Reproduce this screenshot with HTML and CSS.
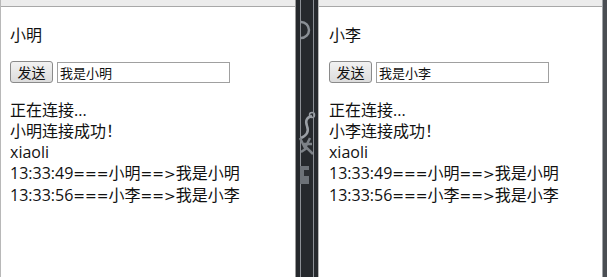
FILE: index.html
```html
<!DOCTYPE html>
<html lang="zh-CN">
<head>
  <meta charset="UTF-8">
  <title>WebSocket 聊天</title>
  <link rel="stylesheet" href="styles.css">
</head>
<body>
  <div class="desktop">
    <!-- 小明 -->
    <section class="pane pane-left">
      <div class="titlebar"></div>
      <div class="page">
        <div class="name">小明</div>
        <div class="send-row">
          <button class="send-btn">发送</button>
          <input class="msg-input" type="text" value="我是小明">
        </div>
        <div class="log">
          <div>正在连接...</div>
          <div>小明连接成功！</div>
          <div>xiaoli</div>
          <div>13:33:49<span class="sep">===</span>小明<span class="sep">==&gt;</span>我是小明</div>
          <div>13:33:56<span class="sep">===</span>小李<span class="sep">==&gt;</span>我是小李</div>
        </div>
      </div>
    </section>

    <div class="dock">
      <svg class="dock-icons" width="22" height="277" viewBox="0 0 22 277">
        <path d="M5 22 a8 8 0 1 1 0 16" fill="none" stroke="#8a8f95" stroke-width="2.5"/>
        <path d="M16 116 q-8 2 -5 10 q3 8 -6 12" fill="none" stroke="#9a9fa5" stroke-width="2.5"/>
        <circle cx="16" cy="115" r="2.5" fill="none" stroke="#9a9fa5" stroke-width="1.5"/>
        <path d="M4 138 l5 10 l5 -10 m-6 6 l8 0 M5 152 l6 -4 l6 6" fill="none" stroke="#7d8288" stroke-width="2.5"/>
        <rect x="4" y="166" width="9" height="18" fill="#6d7278"/>
        <rect x="8" y="170" width="6" height="6" fill="#2b2e32"/>
      </svg>
    </div>

    <!-- 小李 -->
    <section class="pane pane-right">
      <div class="titlebar"></div>
      <div class="page">
        <div class="name">小李</div>
        <div class="send-row">
          <button class="send-btn">发送</button>
          <input class="msg-input" type="text" value="我是小李">
        </div>
        <div class="log">
          <div>正在连接...</div>
          <div>小李连接成功！</div>
          <div>xiaoli</div>
          <div>13:33:49<span class="sep">===</span>小明<span class="sep">==&gt;</span>我是小明</div>
          <div>13:33:56<span class="sep">===</span>小李<span class="sep">==&gt;</span>我是小李</div>
        </div>
      </div>
    </section>
    <div class="edge"></div>
  </div>
</body>
</html>
```

FILE: styles.css
```css
html, body {
  margin: 0;
  padding: 0;
  height: 100%;
  overflow: hidden;
}

body {
  font-family: 'Open Sans', 'Noto Sans CJK SC', sans-serif;
  color: #111;
  background: #2b2e32;
}

.desktop {
  display: flex;
  height: 277px;
}

.pane {
  background: #fff;
  display: flex;
  flex-direction: column;
  box-sizing: border-box;
}

.pane-left {
  width: 297px;
  border-left: 1px solid #b8b8b8;
  border-right: 1px solid #9a9a9a;
}

.pane-right {
  width: 285px;
  border-left: 1px solid #b8b8b8;
}

.titlebar {
  height: 6px;
  background: #ececec;
  border-bottom: 1px solid #a8a8a8;
}

.page {
  padding: 0 9px;
}

.pane-right .page {
  padding-left: 10px;
}

.name {
  margin-top: 18px;
  font-size: 16px;
  line-height: 21px;
}

.send-row {
  display: flex;
  align-items: center;
  gap: 4px;
  margin-top: 14px;
}

.send-btn {
  height: 22px;
  width: 43px;
  padding: 0;
  font-family: 'Noto Sans CJK SC', sans-serif;
  font-size: 14px;
  color: #111;
  background: linear-gradient(#f2f2f2, #dcdcdc);
  border: 1px solid #8a8a8a;
  border-radius: 3px;
}

.msg-input {
  width: 173px;
  height: 21px;
  box-sizing: border-box;
  margin-top: 2px;
  padding: 0 2px;
  font-family: 'Noto Sans CJK SC', sans-serif;
  font-size: 13px;
  color: #111;
  border: 1px solid #a0a0a0;
  outline: none;
}

.log {
  margin-top: 17px;
  font-size: 16px;
  line-height: 21px;
  white-space: nowrap;
}

.sep {
  font-family: 'DejaVu Sans', sans-serif;
  font-size: 14px;
}

.dock {
  width: 22px;
  background: #26292d;
  position: relative;
}

.dock::before,
.dock::after {
  content: '';
  position: absolute;
  top: 0;
  bottom: 0;
  width: 1px;
  background: #8c9096;
}

.dock::before {
  left: 4px;
}

.dock::after {
  left: 17px;
}

.dock-icons {
  display: block;
  position: relative;
}

.edge {
  width: 4px;
  background: #4a4e53;
  border-left: 1px solid #a0a4a8;
}
```
